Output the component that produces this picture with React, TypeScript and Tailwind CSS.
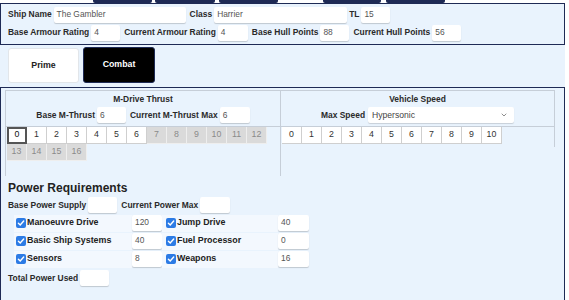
import React from 'react';
import { ChevronDown } from 'lucide-react';

const navy = 'border-[#1e2a55]';

function Field({ value, w }: { value?: string; w: string }) {
  return (
    <span
      className={`${w} h-[16px] bg-white rounded-[2px] shadow-[0_1px_1px_rgba(0,0,0,0.18)] flex items-center pl-[3px] text-[8.4px] text-[#555] font-normal`}
    >
      {value}
    </span>
  );
}

function Label({ children }: { children: React.ReactNode }) {
  return <span className="text-[8.45px] font-bold text-[#2a2a2a] mr-[2px] whitespace-nowrap">{children}</span>;
}

function Tick() {
  return (
    <span className="w-[10px] h-[10px] rounded-[2px] bg-[#2c7be5] flex items-center justify-center mr-[1px]">
      <svg width="8" height="8" viewBox="0 0 8 8">
        <path d="M1.4 4.2 L3.2 6 L6.7 2" stroke="white" strokeWidth="1.4" fill="none" strokeLinecap="round" />
      </svg>
    </span>
  );
}

function NumButtons({ count, enabled, selected }: { count: number; enabled: number; selected?: number }) {
  return (
    <div className="flex flex-wrap w-[260px]">
      {Array.from({ length: count }, (_, i) => {
        const on = i <= enabled;
        const sel = i === selected;
        return (
          <span
            key={i}
            className={
              sel
                ? 'w-[20px] h-[17px] flex items-center justify-center text-[8.8px] bg-white text-[#111] border-2 border-[#555]'
                : on
                ? 'w-[20px] h-[17px] flex items-center justify-center text-[8.8px] bg-white text-[#333] border-r border-b border-[#cfcfcf]'
                : 'w-[20px] h-[17px] flex items-center justify-center text-[8.8px] bg-[#dadada] text-[#8a8a8a] border-r border-b border-[#eeeeee]'
            }
          >
            {i}
          </span>
        );
      })}
    </div>
  );
}

function Check({ label, value, first }: { label: string; value: string; first?: boolean }) {
  return (
    <>
      <div className={`h-[17px] flex items-center bg-[#f3f8fe] ${first ? 'pl-[2px]' : 'pl-[4px]'}`}>
        <Tick />
        <span className="text-[8.9px] font-bold text-[#222]">{label}</span>
      </div>
      <Field value={value} w="w-full" />
    </>
  );
}

export default function App() {
  return (
    <div className="w-[569px] h-[300px] overflow-hidden bg-white font-['Liberation_Sans',Arial,sans-serif]">
      <div className="w-[565px] h-full bg-[#e9f3fd]">
        {/* cut-off nav buttons */}
        <div className="flex h-[3px] bg-white">
          <span className="ml-[93px] w-[59px] bg-[#1e2a55] rounded-b-[2px]" />
          <span className="ml-[3px] w-[60px] bg-[#1e2a55] rounded-b-[2px]" />
          <span className="ml-[4px] w-[59px] bg-[#1e2a55] rounded-b-[2px]" />
          <span className="ml-[45px] w-[58px] bg-[#1e2a55] rounded-b-[2px]" />
          <span className="ml-[5px] w-[59px] bg-[#1e2a55] rounded-b-[2px]" />
        </div>

        {/* ship details */}
        <div className={`border-[1.5px] ${navy} pl-[7px] pt-[1.5px] pb-[2.5px]`}>
          <div className="h-[18px] flex items-center">
            <Label>Ship Name</Label>
            <Field value="The Gambler" w="w-[132px]" />
            <span className="w-[4px]" />
            <Label>Class</Label>
            <Field value="Harrier" w="w-[133px]" />
            <span className="w-[2px]" />
            <Label>TL</Label>
            <Field value="15" w="w-[29px]" />
          </div>
          <div className="h-[18px] flex items-center">
            <Label>Base Armour Rating</Label>
            <Field value="4" w="w-[29px]" />
            <span className="w-[4px]" />
            <Label>Current Armour Rating</Label>
            <Field value="4" w="w-[30px]" />
            <span className="w-[4px]" />
            <Label>Base Hull Points</Label>
            <Field value="88" w="w-[29px]" />
            <span className="w-[4px]" />
            <Label>Current Hull Points</Label>
            <Field value="56" w="w-[29px]" />
          </div>
        </div>

        {/* tabs */}
        <div className="flex gap-[4px] pl-[8px] pt-[2px] pb-[4px]">
          <button className="w-[71px] h-[35px] mt-[1px] bg-white border border-[#e2e6ea] rounded-[3px] text-[8.8px] font-bold text-[#222]">
            Prime
          </button>
          <button className="w-[72px] h-[36px] bg-black border border-[#1e2a55] rounded-[3px] text-[8.8px] font-bold text-white">
            Combat
          </button>
        </div>

        {/* combat panel */}
        <div className={`border-[1.5px] ${navy} h-[220px] px-[4px] pt-[1.5px]`}>
          <div className="flex items-start">
            <div className="w-[276px] h-[86px] border-l border-r border-t border-[#c6ced8]">
              <div className="h-[36px] border-b border-[#c6ced8] pt-[3px]">
                <div className="h-[12px] flex items-center justify-center text-[8.45px] font-bold text-[#2a2a2a]">M-Drive Thrust</div>
                <div className="h-[17px] mt-[1px] flex items-center justify-center">
                  <Label>Base M-Thrust</Label>
                  <Field value="6" w="w-[29px]" />
                  <span className="w-[4px]" />
                  <Label>Current M-Thrust Max</Label>
                  <Field value="6" w="w-[30px]" />
                </div>
              </div>
              <div className="pl-[1px]">
                <NumButtons count={17} enabled={6} selected={0} />
              </div>
            </div>
            <div className="w-[274px] h-[57px] border-r border-t border-[#c6ced8]">
              <div className="h-[36px] border-b border-[#c6ced8] pt-[3px]">
                <div className="h-[12px] flex items-center justify-center text-[8.45px] font-bold text-[#2a2a2a]">Vehicle Speed</div>
                <div className="h-[17px] mt-[1px] flex items-center justify-center">
                  <Label>Max Speed</Label>
                  <span className="w-[146px] h-[16px] ml-[1px] bg-white rounded-[2px] shadow-[0_1px_1px_rgba(0,0,0,0.15)] flex items-center justify-between pl-[4px] pr-[6px] text-[8.6px] text-[#444]">
                    Hypersonic
                    <ChevronDown size={8} strokeWidth={2} className="text-[#555]" />
                  </span>
                </div>
              </div>
              <div className="pl-[1px]">
                <NumButtons count={11} enabled={10} />
              </div>
            </div>
          </div>

          {/* power */}
          <div className="pl-[3px] pt-[5px]">
            <div className="h-[14px] flex items-center text-[12px] font-bold text-[#222]">Power Requirements</div>
            <div className="h-[17px] mt-[2px] flex items-center">
              <Label>Base Power Supply</Label>
              <Field w="w-[29px]" />
              <span className="w-[4px]" />
              <Label>Current Power Max</Label>
              <Field w="w-[30px]" />
            </div>
            <div className="grid grid-cols-[118px_30px_116px_31px] gap-y-[1px] ml-[6px] mt-[1px] w-[300px]">
              <Check label="Manoeuvre Drive" value="120" first />
              <Check label="Jump Drive" value="40" />
              <Check label="Basic Ship Systems" value="40" first />
              <Check label="Fuel Processor" value="0" />
              <Check label="Sensors" value="8" first />
              <Check label="Weapons" value="16" />
            </div>
            <div className="h-[17px] mt-[2px] flex items-center">
              <Label>Total Power Used</Label>
              <Field w="w-[29px]" />
            </div>
          </div>
        </div>
      </div>
    </div>
  );
}
